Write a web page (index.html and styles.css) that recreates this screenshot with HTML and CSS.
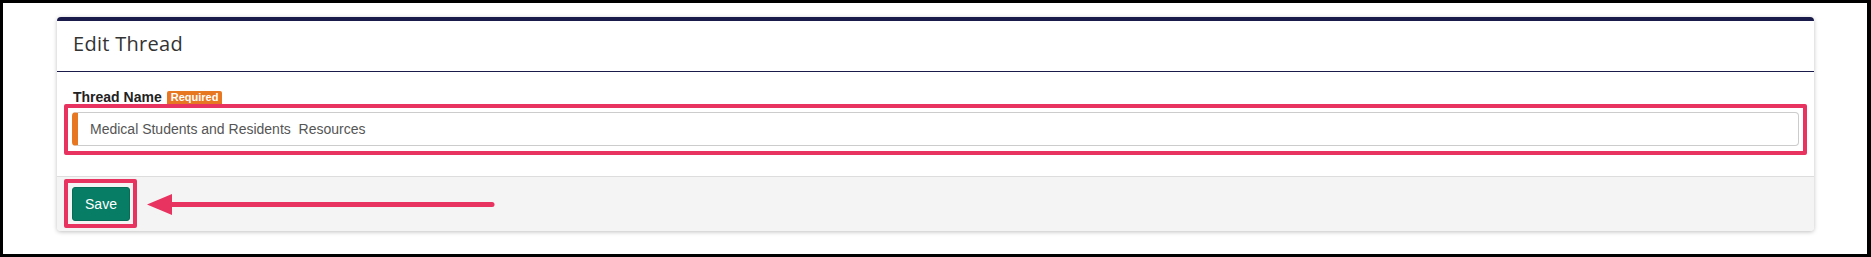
FILE: index.html
```html
<!DOCTYPE html>
<html>
<head>
<meta charset="utf-8">
<title>Edit Thread</title>
<link rel="stylesheet" href="styles.css">
</head>
<body>
<div class="page">
  <div class="card">
    <div class="card-header">
      <h1 class="card-title">Edit Thread</h1>
    </div>
    <div class="card-body">
      <div class="field-label">
        <span class="label-text">Thread Name</span>
        <span class="badge">Required</span>
      </div>
      <div class="highlight highlight-field">
        <input class="text-input" type="text" value="Medical Students and Residents  Resources">
      </div>
    </div>
    <div class="card-footer">
      <div class="highlight highlight-button">
        <button class="btn-save" type="button">Save</button>
      </div>
    </div>
    <svg class="arrow" width="352" height="26" viewBox="0 0 352 26" xmlns="http://www.w3.org/2000/svg">
      <line x1="26" y1="12.5" x2="347" y2="12.5" stroke="#e8325f" stroke-width="5" stroke-linecap="round"/>
      <polygon points="2,12.5 27,2 27,23" fill="#e8325f"/>
    </svg>
  </div>
</div>
</body>
</html>
```
FILE: styles.css
```css
* {
  box-sizing: border-box;
}

html, body {
  margin: 0;
  height: 257px;
  background: #ffffff;
}

body {
  border: 3px solid #000000;
  border-right-width: 4px;
  font-family: "Liberation Sans", Arial, sans-serif;
  overflow: hidden;
}

.page {
  padding: 14px 53px 0 54px;
}

.card {
  position: relative;
  background: #ffffff;
  border-top: 4px solid #1a1b4b;
  border-radius: 4px;
  box-shadow: 0 1px 4px rgba(0, 0, 0, 0.25);
}

.card-header {
  height: 51px;
  border-bottom: 1px solid #1a1b4b;
  padding: 0 16px 4px 16px;
}

.card-title {
  margin: 0;
  font-family: "Open Sans", "DejaVu Sans", sans-serif;
  font-weight: 500;
  font-size: 20px;
  letter-spacing: 0.3px;
  line-height: 46px;
  color: #333333;
}

.card-body {
  padding: 18px 7px 21px 7px;
}

.field-label {
  display: flex;
  align-items: flex-start;
  margin-left: 9px;
  height: 14px;
  line-height: 14px;
}

.label-text {
  font-size: 14px;
  font-weight: 700;
  color: #222222;
}

.badge {
  margin-left: 5px;
  margin-top: 1px;
  background: #e87722;
  color: #ffffff;
  font-size: 11px;
  font-weight: 700;
  line-height: 13px;
  height: 13px;
  padding: 0 4px;
  border-radius: 2px 2px 0 0;
}

.highlight {
  border: 4px solid #e8325f;
  border-radius: 2px;
}

.highlight-field {
  padding: 4px 4px 5px 4px;
}

.text-input {
  display: block;
  width: 100%;
  height: 34px;
  margin: 0;
  border: 1px solid #cccccc;
  border-left: 6px solid #e87722;
  border-radius: 4px;
  padding: 0 12px;
  font-family: "Liberation Sans", Arial, sans-serif;
  font-size: 14px;
  color: #555555;
  background: #ffffff;
  outline: none;
}

.card-footer {
  background: #f4f4f4;
  border-top: 1px solid #dddddd;
  border-radius: 0 0 4px 4px;
  padding: 2px 7px 3px 7px;
}

.highlight-button {
  display: inline-block;
  padding: 4px 3px 3px 4px;
  vertical-align: top;
}

.btn-save {
  display: block;
  height: 34px;
  width: 58px;
  margin: 0;
  padding: 0;
  border: 1px solid #066b57;
  border-radius: 3px;
  background: #077d66;
  color: #ffffff;
  font-family: "Liberation Sans", Arial, sans-serif;
  font-size: 14px;
  cursor: pointer;
}

.arrow {
  position: absolute;
  left: 88px;
  top: 171px;
}
```
